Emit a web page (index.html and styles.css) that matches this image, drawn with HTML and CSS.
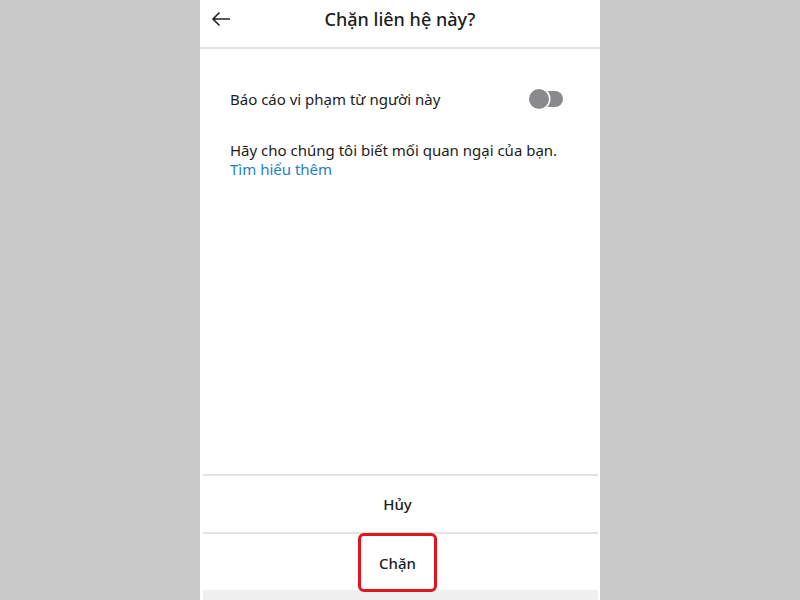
FILE: index.html
```html
<!DOCTYPE html>
<html lang="vi">
<head>
<meta charset="utf-8">
<link rel="stylesheet" href="styles.css">
</head>
<body>
<div class="screen">
  <header class="topbar">
    <svg class="back" width="20" height="16" viewBox="0 0 20 16"><path d="M19 8H2M8.5 1.5L2 8l6.5 6.5" fill="none" stroke="#222" stroke-width="1.6"/></svg>
    <h1 class="title">Chặn liên hệ này?</h1>
  </header>
  <main class="content">
    <div class="row">
      <span>Báo cáo vi phạm từ người này</span>
      <span class="toggle"><span class="track"></span><span class="knob"></span></span>
    </div>
    <p class="info">Hãy cho chúng tôi biết mối quan ngại của bạn.<br><a class="link">Tìm hiểu thêm</a></p>
  </main>
  <div class="actions">
    <div class="btn">Hủy</div>
    <div class="btn"><span class="highlight">Chặn</span></div>
    <div class="footer"></div>
  </div>
</div>
</body>
</html>
```
FILE: styles.css
```css
html, body { margin: 0; padding: 0; }
body {
  background: #c9c9c9;
  font-family: "Noto Sans", "Open Sans", sans-serif;
  color: #1c1c1c;
}
.screen {
  width: 400px;
  height: 600px;
  margin: 0 auto;
  background: #fff;
  display: flex;
  flex-direction: column;
}
.topbar {
  height: 47px;
  border-bottom: 2px solid #e3e3e3;
  position: relative;
  display: flex;
  align-items: center;
  justify-content: center;
}
.back { position: absolute; left: 11px; top: 11px; }
.title {
  margin: 0;
  font-size: 18px;
  font-weight: 500;
  margin-top: -9px;
}
.content { flex: 1; padding: 0 30px; }
.row {
  display: flex;
  justify-content: space-between;
  align-items: center;
  font-size: 15px;
  margin-top: 40px;
  padding-right: 7px;
}
.toggle { position: relative; width: 34px; height: 20px; }
.track {
  position: absolute; left: 10px; top: 2px; width: 24px; height: 16px;
  background: #8a8a8c; border-radius: 8px;
}
.knob {
  position: absolute; left: 0; top: 0; width: 20px; height: 20px;
  background: #8a8a8c; border-radius: 50%; box-shadow: 0 0 0 1.5px #fff;
}
.info { font-size: 15px; margin: 32px 0 0; line-height: 19px; }
.link { color: #1f7fc6; }
.actions { display: flex; flex-direction: column; padding: 0 2px 0 3px; }
.btn {
  height: 56px;
  border-top: 2px solid #e3e3e3;
  display: flex; align-items: center; justify-content: center;
  font-size: 15px; font-weight: 500;
  padding-right: 6px;
}
.highlight {
  width: 73px; height: 53px; margin-top: 1px;
  border: 3px solid #e2141c; border-radius: 6px;
  display: flex; align-items: center; justify-content: center;
  position: relative; top: 0;
}
.footer { height: 10px; background: #f0f0f0; }
```
